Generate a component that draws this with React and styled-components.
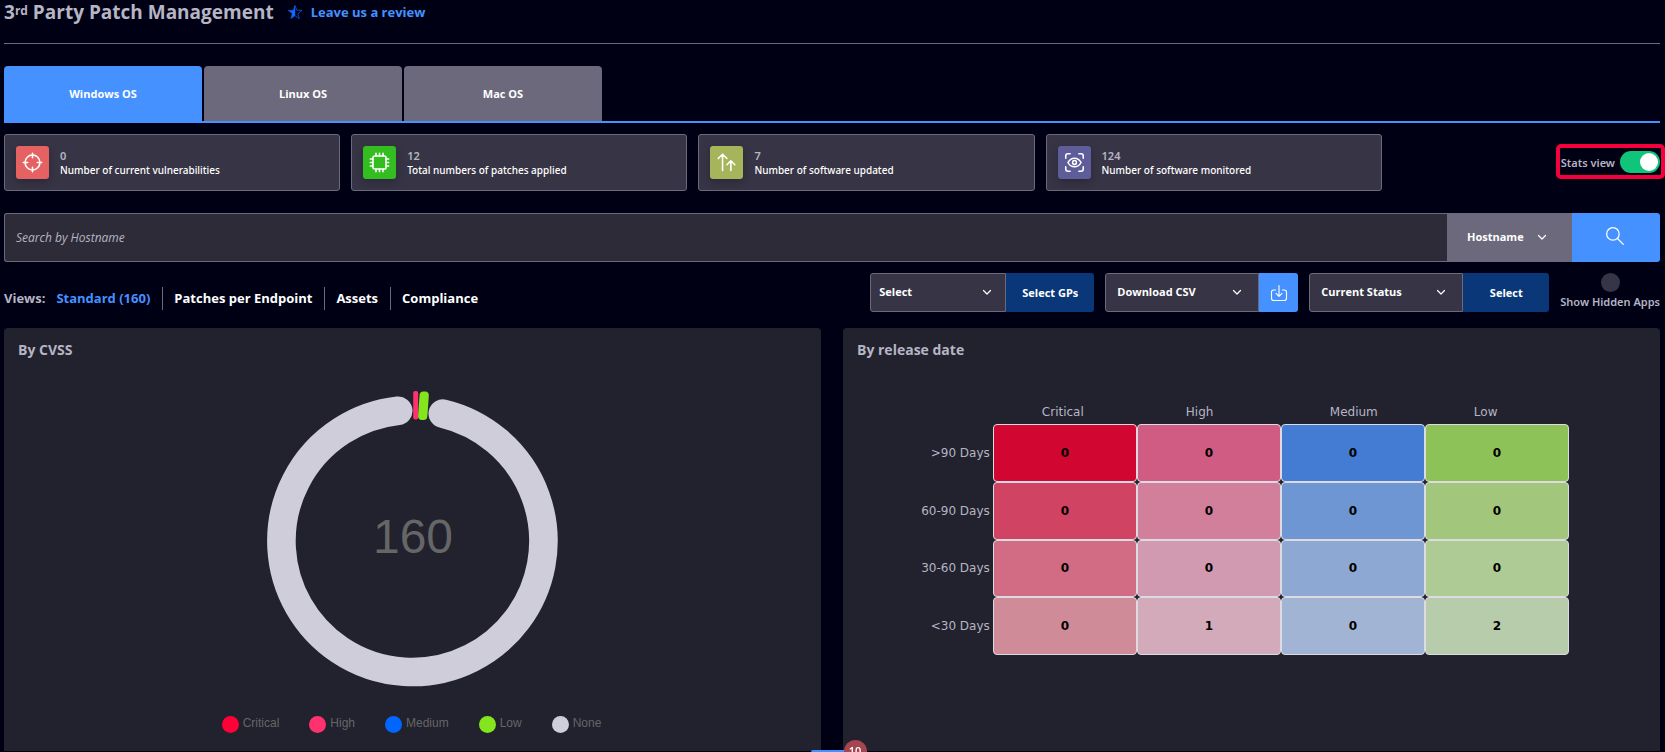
import React, { useState } from "react";
import styled, { createGlobalStyle } from "styled-components";

const c = {
  bg: "#000015",
  panel: "#22212e",
  card: "#373545",
  field: "#2d2b38",
  line: "#6b697b",
  muted: "#b6b5c3",
  blue: "#4591ff",
  navy: "#0a3778",
};

const GlobalStyle = createGlobalStyle`
  * { box-sizing: border-box; }
  html { overflow: hidden; }
  body { margin: 0; background: ${c.bg}; color: #fff; font-family: "Open Sans", "Noto Sans", sans-serif; font-size: 12px; }
  button, input, select { font-family: inherit; font-size: 11px; color: inherit; margin: 0; }
  button { cursor: pointer; border: 0; }
  a { text-decoration: none; }
`;

const Page = styled.div`
  display: flex;
  flex-direction: column;
  height: 100vh;
  padding: 0 5px 1px 4px;
`;

const Header = styled.header`
  display: flex;
  align-items: center;
  gap: 13px;
  height: 44px;
  padding-bottom: 19px;
  border-bottom: 1px solid ${c.line};
`;

const Title = styled.h1`
  margin: 0;
  font-size: 19px;
  line-height: 24px;
  font-weight: 700;
  color: ${c.muted};
  sup { font-size: 12px; line-height: 0; vertical-align: 4px; }
`;

const ReviewLink = styled.a`
  display: flex;
  align-items: center;
  gap: 8px;
  font-size: 13px;
  line-height: 20px;
  font-weight: 700;
  color: ${c.blue};
`;

const Tabs = styled.nav`
  display: flex;
  gap: 2px;
  margin-top: 22px;
  border-bottom: 2px solid ${c.blue};
`;

const Tab = styled.button`
  width: 198px;
  height: 55px;
  border-radius: 4px 4px 0 0;
  font-weight: 700;
  background: ${(p) => (p.$active ? c.blue : c.line)};
`;

const StatsRow = styled.section`
  display: flex;
  align-items: center;
  justify-content: space-between;
  margin-top: 11px;
`;

const Cards = styled.div`
  display: grid;
  grid-template-columns: repeat(4, 1fr);
  gap: 11px;
  width: 83.2%;
`;

const Card = styled.article`
  display: flex;
  align-items: center;
  gap: 11px;
  height: 57px;
  padding: 0 11px;
  background: ${c.card};
  border: 1px solid ${c.line};
  border-radius: 3px;
`;

const IconTile = styled.span`
  display: grid;
  place-items: center;
  width: 33px;
  height: 33px;
  border-radius: 3px;
  background: ${(p) => p.$color};
  box-shadow: 0 3px 8px rgba(0, 0, 20, 0.25);
`;

const CardText = styled.div`
  display: flex;
  flex-direction: column;
  font-family: "Noto Sans", "Open Sans", sans-serif;
  font-size: 10px;
  font-weight: 500;
  line-height: 15px;
  strong { font-size: 11px; font-weight: 600; color: ${c.muted}; }
`;

const Highlight = styled.label`
  display: flex;
  align-items: center;
  gap: 5px;
  margin: 0 -5px 2px 0;
  padding: 3px 1px 2px;
  border: 4px solid #f5003d;
  border-radius: 5px;
  color: ${c.muted};
  font-family: "Noto Sans", "Open Sans", sans-serif;
  font-size: 11px;
  font-weight: 600;
  white-space: nowrap;
`;

const Switch = styled.input`
  appearance: none;
  display: flex;
  align-items: center;
  justify-content: flex-end;
  width: 40px;
  height: 22px;
  padding: 2px;
  border-radius: 11px;
  background: #10c47a;
  &:not(:checked) { justify-content: flex-start; background: ${c.line}; }
  &::before { content: ""; width: 18px; height: 18px; border-radius: 50%; background: #fff; }
`;

const SearchBar = styled.form`
  display: flex;
  height: 49px;
  margin-top: 22px;
`;

const SearchInput = styled.input`
  flex: 1;
  min-width: 0;
  padding: 0 11px;
  font-size: 12px;
  background: ${c.field};
  border: 1px solid ${c.line};
  border-right: 0;
  border-radius: 3px 0 0 3px;
  &::placeholder { color: ${c.muted}; opacity: 1; font-style: italic; }
`;

const SearchButton = styled.button`
  display: grid;
  place-items: center;
  width: 88px;
  padding: 0 2px 4px 0;
  background: ${c.blue};
  border-radius: 0 3px 3px 0;
`;

const SelectWrap = styled.span`
  position: relative;
  display: flex;
  width: ${(p) => p.$width}px;
  svg {
    position: absolute;
    right: ${(p) => p.$arrow}px;
    top: calc(50% - 6px);
    pointer-events: none;
  }
`;

const Select = styled.select`
  appearance: none;
  width: 100%;
  padding: 0 24px 2px ${(p) => p.$pad}px;
  font-weight: 700;
  border: 1px solid ${c.line};
  border-radius: ${(p) => (p.$solid ? "0" : "3px 0 0 3px")};
  background: ${(p) => (p.$solid ? c.line : c.card)};
`;

const Toolbar = styled.section`
  display: flex;
  justify-content: space-between;
  margin-top: 11px;
`;

const Views = styled.nav`
  display: flex;
  align-items: center;
  height: 23px;
  margin-top: 14px;
  font-size: 13px;
  line-height: 18px;
  font-weight: 700;
  white-space: nowrap;
`;

const ViewsLabel = styled.span`
  padding-bottom: 2px;
  color: ${c.muted};
`;

const ViewLink = styled.a`
  display: flex;
  align-items: center;
  height: 23px;
  padding: 0 12px 1px 11px;
  color: ${(p) => (p.$active ? c.blue : "#fff")};
  & + & { border-left: 1px solid ${c.line}; }
`;

const Actions = styled.div`
  display: flex;
  gap: 11px;
`;

const ActionGroup = styled.div`
  display: flex;
  height: 39px;
`;

const ActionButton = styled.button`
  display: grid;
  place-items: center;
  width: ${(p) => p.$width}px;
  padding: 0;
  font-weight: 700;
  border-radius: 0 3px 3px 0;
  background: ${(p) => (p.$bright ? c.blue : c.navy)};
`;

const HiddenToggle = styled.label`
  display: flex;
  flex-direction: column;
  align-items: center;
  color: ${c.muted};
  font-family: "Noto Sans", "Open Sans", sans-serif;
  font-size: 11px;
  font-weight: 600;
  line-height: 20px;
  white-space: nowrap;
`;

const RoundCheck = styled.input`
  appearance: none;
  width: 19px;
  height: 19px;
  border-radius: 50%;
  background: ${c.card};
  &:checked { background: ${c.blue}; }
`;

const Panels = styled.main`
  display: grid;
  grid-template-columns: 1fr 1fr;
  gap: 22px;
  flex: 1;
  margin-top: 16px;
`;

const Panel = styled.section`
  display: flex;
  flex-direction: column;
  align-items: center;
  padding: 12px 14px;
  background: ${c.panel};
  border-radius: 4px 4px 0 0;
`;

const PanelTitle = styled.h2`
  align-self: stretch;
  margin: 0;
  font-size: 14px;
  line-height: 20px;
  font-weight: 700;
  color: ${c.muted};
`;

const Donut = styled.svg`
  display: block;
  margin-top: 28px;
`;

const Legend = styled.ul`
  display: flex;
  gap: 30px;
  margin: 26px 0 0;
  padding: 0 2px 0 0;
  list-style: none;
  font: 12px/18px "Liberation Sans", Arial, sans-serif;
  color: #666;
  li { display: flex; gap: 4px; }
`;

const Dot = styled.span`
  width: 17px;
  height: 17px;
  margin-top: 2px;
  border-radius: 50%;
  background: ${(p) => p.$color};
`;

const HeatTable = styled.table`
  height: 255px;
  margin: 40px 13px 0 0;
  border-collapse: separate;
  border-spacing: 0;
  font: 12px/18px "DejaVu Sans", Verdana, sans-serif;
`;

const ColumnLabel = styled.th`
  width: 144px;
  height: 24px;
  padding: 0 0 0 49px;
  font-weight: 400;
  text-align: left;
  color: ${c.muted};
`;

const RowLabel = styled.th`
  padding: 0 3px 0 0;
  font-weight: 400;
  text-align: right;
  white-space: nowrap;
  color: ${c.muted};
`;

const Cell = styled.td`
  padding: 0;
  border: 1px solid #dcdbe2;
  border-radius: 4px;
  background: ${(p) => p.$color};
  color: #000;
  font-weight: 700;
  text-align: center;
`;

const Dock = styled.div`
  position: fixed;
  left: calc(50% - 22px);
  bottom: 0;
  width: 44px;
  height: 2px;
  border-radius: 3px 0 0 0;
  background: ${c.blue};
`;

const DockBadge = styled.span`
  position: absolute;
  left: 33px;
  top: -10px;
  width: 23px;
  height: 23px;
  border-radius: 50%;
  background: #a5454f;
  font-size: 11px;
  font-weight: 600;
  line-height: 22px;
  text-align: center;
`;

const Stroke = ({ size, children, width = 1.5 }) => (
  <svg width={size} height={size} viewBox="0 0 24 24" fill="none" stroke="#fff" strokeWidth={width} strokeLinecap="round" strokeLinejoin="round" aria-hidden="true">
    {children}
  </svg>
);

const Chevron = () => (
  <svg width="10" height="10" viewBox="0 0 10 10" fill="none" stroke="#fff" strokeWidth="1.2" strokeLinecap="round" strokeLinejoin="round" aria-hidden="true">
    <path d="M1.5 3.5 5 7l3.500-3.500" />
  </svg>
);

const Star = () => (
  <svg width="16" height="16" viewBox="0 0 24 24" fill="none" stroke="#0d6bff" strokeLinejoin="round" aria-hidden="true">
    <path d="m12 2 2.600 7.300 7.900.2-6.300 4.900 2.200 7.600-6.400-4.400" strokeWidth="1" />
    <path d="M12 2 9.400 9.300l-7.900.2 6.300 4.900L5.600 22l6.400-4.400Z" fill="#0d6bff" strokeWidth=".5" />
  </svg>
);

const stats = [
  {
    value: "0", label: "Number of current vulnerabilities", color: "#e66262",
    icon: <Stroke size={21} width={1.8}><circle cx="12" cy="12" r="8.500" /><path d="M12 1.500v5M12 17.500v5M1.500 12h5M17.500 12h5" /></Stroke>,
  },
  {
    value: "12", label: "Total numbers of patches applied", color: "#34bd20",
    icon: <Stroke size={21} width={1.8}><rect x="4.500" y="4.500" width="15" height="15" rx="2" /><path d="M8 1.500v3M12 1.500v3M16 1.500v3M8 19.500v3M12 19.500v3M16 19.500v3M1.500 8h3M1.500 12h3M1.500 16h3M19.500 8h3M19.500 12h3M19.500 16h3" /></Stroke>,
  },
  {
    value: "7", label: "Number of software updated", color: "#a6b55c",
    icon: <Stroke size={21} width={1.8}><path d="M7.500 21V2.500M2.500 7.500l5-5 5 5M17 21V10M12.500 14.500 17 10l4.500 4.500" /></Stroke>,
  },
  {
    value: "124", label: "Number of software monitored", color: "#5e5c99",
    icon: <Stroke size={21} width={1.8}><path d="M2 7V4.500A2.500 2.500 0 0 1 4.500 2H7M17 2h2.500A2.500 2.500 0 0 1 22 4.500V7M22 17v2.500a2.500 2.500 0 0 1-2.500 2.500H17M7 22H4.500A2.500 2.500 0 0 1 2 19.500V17" /><path d="M4.500 12C8 5.500 16 5.500 19.500 12 16 18.500 8 18.500 4.500 12Z" /><circle cx="12" cy="12" r="2.200" /></Stroke>,
  },
];

const views = ["Standard (160)", "Patches per Endpoint", "Assets", "Compliance"];

const legend = [
  ["Critical", "#ff0037"],
  ["High", "#ff316f"],
  ["Medium", "#0066ff"],
  ["Low", "#84e41e"],
  ["None", "#cecdd9"],
];

const severities = ["Critical", "High", "Medium", "Low"];

const heat = [
  [">90 Days", [0, 0, 0, 0], ["#d10631", "#d15c83", "#447cd3", "#8dc259"]],
  ["60-90 Days", [0, 0, 0, 0], ["#d14363", "#d17f9b", "#6e96d3", "#a2c77c"]],
  ["30-60 Days", [0, 0, 0, 0], ["#d16c84", "#d19ab0", "#8ea8d4", "#aecb95"]],
  ["<30 Days", [0, 1, 0, 2], ["#d08b99", "#d2aaba", "#a2b4d4", "#b7ccaa"]],
];

function Dropdown({ label, text, width, arrow, pad, solid }) {
  return (
    <SelectWrap $width={width} $arrow={arrow}>
      <Select aria-label={label} $pad={pad} $solid={solid}>
        <option>{text}</option>
      </Select>
      <Chevron />
    </SelectWrap>
  );
}

export default function App() {
  const [tab, setTab] = useState("Windows OS");
  return (
    <>
      <GlobalStyle />
      <Page>
        <Header>
          <Title>3<sup>rd</sup> Party Patch Management</Title>
          <ReviewLink href="#review"><Star />Leave us a review</ReviewLink>
        </Header>

        <Tabs>
          {["Windows OS", "Linux OS", "Mac OS"].map((name) => (
            <Tab key={name} $active={tab === name} onClick={() => setTab(name)}>{name}</Tab>
          ))}
        </Tabs>

        <StatsRow>
          <Cards>
            {stats.map((s) => (
              <Card key={s.label}>
                <IconTile $color={s.color}>{s.icon}</IconTile>
                <CardText><strong>{s.value}</strong><span>{s.label}</span></CardText>
              </Card>
            ))}
          </Cards>
          <Highlight>Stats view<Switch type="checkbox" role="switch" defaultChecked /></Highlight>
        </StatsRow>

        <SearchBar onSubmit={(e) => e.preventDefault()}>
          <SearchInput aria-label="Search" placeholder="Search by Hostname" />
          <Dropdown label="Search field" text="Hostname" width={125} arrow={25} pad={19} solid />
          <SearchButton aria-label="Search">
            <Stroke size={20}><circle cx="9.500" cy="9.500" r="7.500" /><path d="m15 15 7 7" /></Stroke>
          </SearchButton>
        </SearchBar>

        <Toolbar>
          <Views>
            <ViewsLabel>Views:</ViewsLabel>
            {views.map((v, i) => <ViewLink key={v} href="#view" $active={i === 0}>{v}</ViewLink>)}
          </Views>
          <Actions>
            <ActionGroup>
              <Dropdown label="Group policy" text="Select" width={136} arrow={14} pad={8} />
              <ActionButton $width={88}>Select GPs</ActionButton>
            </ActionGroup>
            <ActionGroup>
              <Dropdown label="Export format" text="Download CSV" width={154} arrow={17} pad={11} />
              <ActionButton $width={39} $bright aria-label="Download">
                <Stroke size={18}><path d="M7.500 8H5a3 3 0 0 0-3 3v8a3 3 0 0 0 3 3h14a3 3 0 0 0 3-3v-8a3 3 0 0 0-3-3h-2.500M12 2v14M8 12.500l4 4 4-4" /></Stroke>
              </ActionButton>
            </ActionGroup>
            <ActionGroup>
              <Dropdown label="Status" text="Current Status" width={154} arrow={17} pad={11} />
              <ActionButton $width={86}>Select</ActionButton>
            </ActionGroup>
            <HiddenToggle><RoundCheck type="checkbox" />Show Hidden Apps</HiddenToggle>
          </Actions>
        </Toolbar>

        <Panels>
          <Panel>
            <PanelTitle>By CVSS</PanelTitle>
            <Donut width="300" height="300" viewBox="0 0 300 300" role="img" aria-label="160 patches by CVSS">
              <g fill="none" strokeLinecap="round">
                <path d="M179.800 25.600A131 131 0 1 1 135.200 22.800" stroke="#cecdd9" strokeWidth="28.600" />
              </g>
              <rect x="150.200" y="3" width="5" height="28.500" rx="2" fill="#ff316f" />
              <rect x="155.800" y="3.500" width="9.300" height="28.500" rx="4" fill="#84e41e" transform="rotate(4 160.500 18)" />
              <text x="150" y="165" textAnchor="middle" fontFamily="Liberation Sans, Arial, sans-serif" fontSize="48" fill="#666">160</text>
            </Donut>
            <Legend>
              {legend.map(([name, color]) => <li key={name}><Dot $color={color} />{name}</li>)}
            </Legend>
          </Panel>

          <Panel>
            <PanelTitle>By release date</PanelTitle>
            <HeatTable>
              <thead>
                <tr>
                  <td />
                  {severities.map((s) => <ColumnLabel key={s} scope="col">{s}</ColumnLabel>)}
                </tr>
              </thead>
              <tbody>
                {heat.map(([label, values, colors]) => (
                  <tr key={label}>
                    <RowLabel scope="row">{label}</RowLabel>
                    {values.map((v, i) => <Cell key={severities[i]} $color={colors[i]}>{v}</Cell>)}
                  </tr>
                ))}
              </tbody>
            </HeatTable>
          </Panel>
        </Panels>
      </Page>
      <Dock><DockBadge>10</DockBadge></Dock>
    </>
  );
}
